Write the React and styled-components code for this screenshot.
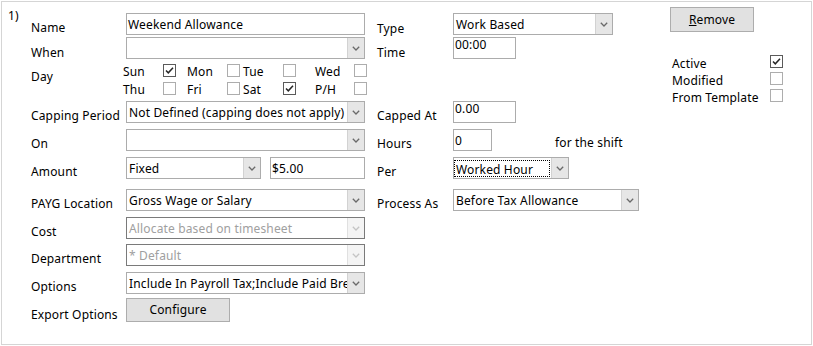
import React from 'react';
import styled, { createGlobalStyle } from 'styled-components';

const GlobalStyle = createGlobalStyle`
  html, body {
    margin: 0;
    padding: 0;
    background: #ffffff;
  }
  body {
    font-family: "Noto Sans", "Open Sans", Arial, sans-serif;
    font-size: 12px;
    letter-spacing: 0.15px;
    color: #000000;
  }
`;

const Panel = styled.div`
  box-sizing: border-box;
  width: 811px;
  height: 344px;
  margin: 1px 0 0 1px;
  border: 1px solid #d5d5d5;
  padding: 5px 0 0 6px;
  display: flex;
  align-items: flex-start;
`;

const Index = styled.div`
  width: 23px;
  margin-top: 1px;
  line-height: 16px;
`;

const Form = styled.div`
  margin-top: 6px;
  display: grid;
  grid-template-columns: 95px 239px 12px 76px 186px;
  grid-template-rows: 24px 27px 37px 28px 28px 32px 28px 27px 28px 26px 24px;
  align-items: start;
`;

const Label = styled.div`
  grid-column: ${p => p.$col || 1};
  grid-row: ${p => p.$row};
  padding-top: ${p => (p.$pad !== undefined ? p.$pad : 7)}px;
  line-height: 16px;
  white-space: nowrap;
`;

const Cell = styled.div`
  grid-column: ${p => p.$col || 2};
  grid-row: ${p => p.$row};
  display: flex;
  align-items: flex-start;
`;

const TextBox = styled.div`
  box-sizing: border-box;
  width: ${p => p.$w}px;
  height: 22px;
  border: 1px solid #acacac;
  background: #ffffff;
  padding: ${p => (p.$top ? '0 0 0 1px' : '2px 0 0 1px')};
  line-height: ${p => (p.$top ? 14 : 18)}px;
  white-space: nowrap;
`;

const Combo = styled.div`
  box-sizing: border-box;
  width: ${p => p.$w}px;
  height: 22px;
  border: 1px solid ${p => (p.$disabled ? '#7a7a7a' : '#acacac')};
  background: #ffffff;
  display: flex;
  color: ${p => (p.$disabled ? '#a0a0a0' : '#000000')};
`;

const ComboValue = styled.div`
  flex: 1;
  min-width: 0;
  padding: 2px 0 0 2px;
  line-height: 18px;
  white-space: nowrap;
  overflow: hidden;
`;

const FocusValue = styled.div`
  flex: 1;
  min-width: 0;
  margin: 2px 1px 1px 0;
  padding: 1px 0 0 1px;
  border: 1px dotted #000000;
  line-height: 15px;
  white-space: nowrap;
  overflow: hidden;
`;

const DropButton = styled.div`
  width: 16px;
  flex: none;
  display: flex;
  align-items: center;
  justify-content: center;
  background: ${p => (p.$disabled ? '#f4f4f4' : '#e6e6e6')};
  border-left: 1px solid ${p => (p.$disabled ? '#e0e0e0' : '#d2d2d2')};
`;

const Chevron = ({ disabled }) => (
  <svg width="8" height="5" viewBox="0 0 8 5">
    <polyline
      points="0.8,0.8 4,4 7.2,0.8"
      fill="none"
      stroke={disabled ? '#c4c4c4' : '#6a6a6a'}
      strokeWidth="1.3"
    />
  </svg>
);

const Select = ({ w, value, disabled, focus }) => (
  <Combo $w={w} $disabled={disabled}>
    {focus ? <FocusValue>{value}</FocusValue> : <ComboValue>{value}</ComboValue>}
    <DropButton $disabled={disabled}>
      <Chevron disabled={disabled} />
    </DropButton>
  </Combo>
);

const Box = styled.div`
  box-sizing: border-box;
  width: 13px;
  height: 13px;
  border: 1px solid ${p => (p.$checked ? '#5a5a5a' : '#adadad')};
  background: #ffffff;
  display: flex;
  align-items: center;
  justify-content: center;
`;

const CheckBox = ({ checked }) => (
  <Box $checked={checked}>
    {checked && (
      <svg width="11" height="11" viewBox="0 0 11 11">
        <polyline points="2,5.5 4.3,7.8 9,2.8" fill="none" stroke="#262626" strokeWidth="1.5" />
      </svg>
    )}
  </Box>
);

const DayGrid = styled.div`
  margin-left: -3px;
  display: grid;
  grid-template-columns: 40px 24px 40px 16px 40px 32px 39px 13px;
  grid-template-rows: 13px 13px;
  row-gap: 5px;
`;

const DayName = styled.div`
  line-height: 13px;
  padding-top: 1px;
`;

const AmountRow = styled.div`
  display: flex;
  gap: 9px;
`;

const Note = styled.div`
  margin-left: 63px;
  padding-top: 6px;
  line-height: 16px;
  white-space: nowrap;
`;

const Button = styled.div`
  box-sizing: border-box;
  width: ${p => p.$w}px;
  height: ${p => p.$h}px;
  border: 1px solid #adadad;
  background: #e1e1e1;
  display: flex;
  align-items: center;
  justify-content: center;
  line-height: 16px;
`;

const Side = styled.div`
  margin-left: 31px;
  display: flex;
  flex-direction: column;
`;

const Flags = styled.div`
  margin-top: 23px;
  display: grid;
  grid-template-columns: 98px 13px;
  grid-auto-rows: 17px;
  padding-left: 2px;
`;

const FlagName = styled.div`
  line-height: 16px;
  padding-top: 1px;
`;

const days = [
  ['Sun', true], ['Mon', false], ['Tue', false], ['Wed', false],
  ['Thu', false], ['Fri', false], ['Sat', true], ['P/H', false],
];

const flags = [
  ['Active', true],
  ['Modified', false],
  ['From Template', false],
];

export default function App() {
  return (
    <>
      <GlobalStyle />
      <Panel>
        <Index>1)</Index>
        <Form>
          <Label $row={1}>Name</Label>
          <Cell $row={1}><TextBox $w={239}>Weekend Allowance</TextBox></Cell>
          <Label $row={1} $col={4} $pad={8}>Type</Label>
          <Cell $row={1} $col={5}><Select w={160} value="Work Based" /></Cell>

          <Label $row={2} $pad={8}>When</Label>
          <Cell $row={2}><Select w={239} value="" /></Cell>
          <Label $row={2} $col={4} $pad={8}>Time</Label>
          <Cell $row={2} $col={5}><TextBox $w={63} $top>00:00</TextBox></Cell>

          <Label $row={3} $pad={5}>Day</Label>
          <Cell $row={3}>
            <DayGrid>
              {days.map(([d, c]) => (
                <React.Fragment key={d}>
                  <DayName>{d}</DayName>
                  <CheckBox checked={c} />
                </React.Fragment>
              ))}
            </DayGrid>
          </Cell>

          <Label $row={4}>Capping Period</Label>
          <Cell $row={4}><Select w={239} value="Not Defined (capping does not apply)" /></Cell>
          <Label $row={4} $col={4}>Capped At</Label>
          <Cell $row={4} $col={5}><TextBox $w={63} $top>0.00</TextBox></Cell>

          <Label $row={5}>On</Label>
          <Cell $row={5}><Select w={239} value="" /></Cell>
          <Label $row={5} $col={4}>Hours</Label>
          <Cell $row={5} $col={5}>
            <TextBox $w={39}>0</TextBox>
            <Note>for the shift</Note>
          </Cell>

          <Label $row={6}>Amount</Label>
          <Cell $row={6}>
            <AmountRow>
              <Select w={135} value="Fixed" />
              <TextBox $w={95}>$5.00</TextBox>
            </AmountRow>
          </Cell>
          <Label $row={6} $col={4}>Per</Label>
          <Cell $row={6} $col={5}><Select w={116} value="Worked Hour" focus /></Cell>

          <Label $row={7}>PAYG Location</Label>
          <Cell $row={7}><Select w={239} value="Gross Wage or Salary" /></Cell>
          <Label $row={7} $col={4}>Process As</Label>
          <Cell $row={7} $col={5}><Select w={186} value="Before Tax Allowance" /></Cell>

          <Label $row={8}>Cost</Label>
          <Cell $row={8}><Select w={239} value="Allocate based on timesheet" disabled /></Cell>

          <Label $row={9}>Department</Label>
          <Cell $row={9}><Select w={239} value="* Default" disabled /></Cell>

          <Label $row={10}>Options</Label>
          <Cell $row={10}><Select w={239} value="Include In Payroll Tax;Include Paid Breaks" /></Cell>

          <Label $row={11} $pad={9}>Export Options</Label>
          <Cell $row={11}><Button $w={104} $h={24}>Configure</Button></Cell>
        </Form>
        <Side>
          <Button $w={84} $h={25}><span><u>R</u>emove</span></Button>
          <Flags>
            {flags.map(([f, c]) => (
              <React.Fragment key={f}>
                <FlagName>{f}</FlagName>
                <CheckBox checked={c} />
              </React.Fragment>
            ))}
          </Flags>
        </Side>
      </Panel>
    </>
  );
}
